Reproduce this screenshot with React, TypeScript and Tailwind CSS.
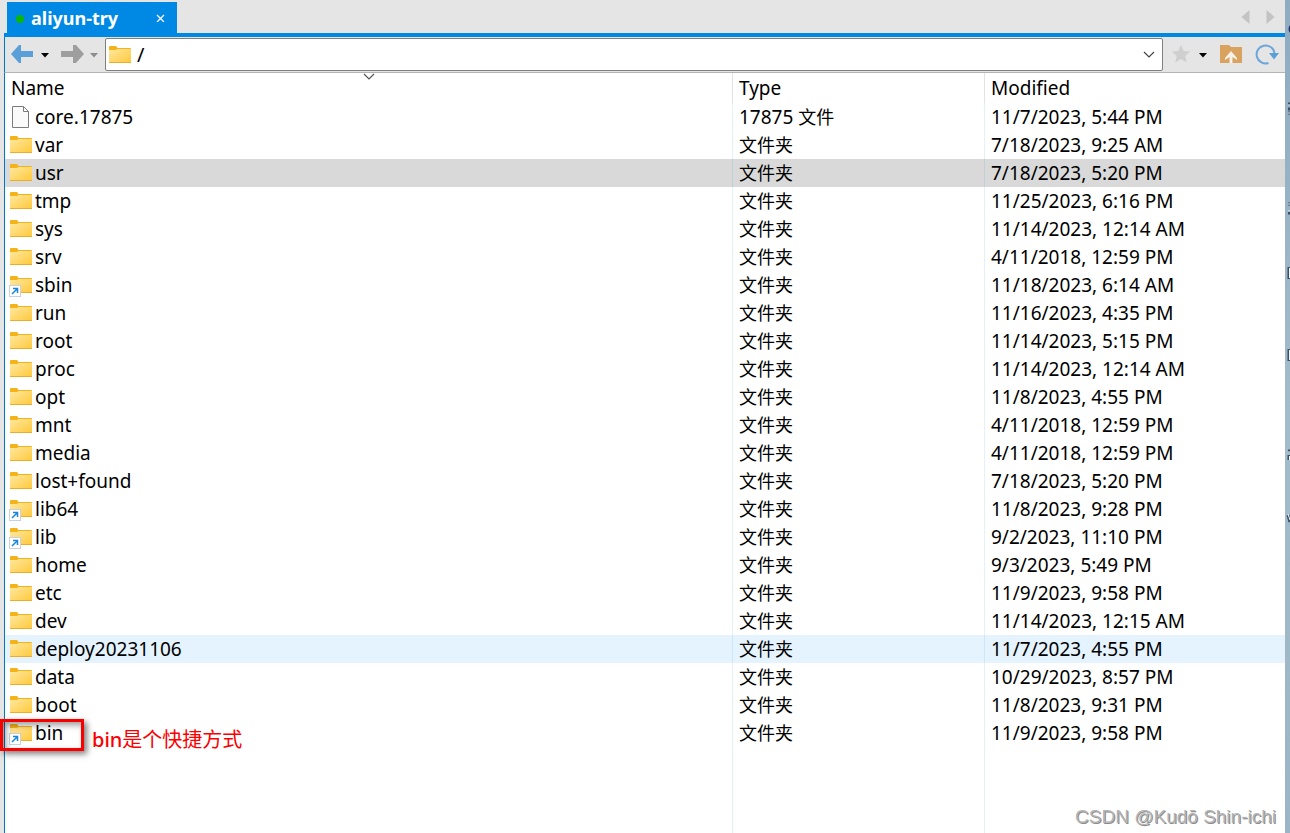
import { ReactNode } from "react";

interface Entry {
  name: string;
  modified: string;
  kind?: "file" | "link";
  state?: "selected" | "hover";
}

const entries: Entry[] = [
  { name: "core.17875", modified: "11/7/2023, 5:44 PM", kind: "file" },
  { name: "var", modified: "7/18/2023, 9:25 AM" },
  { name: "usr", modified: "7/18/2023, 5:20 PM", state: "selected" },
  { name: "tmp", modified: "11/25/2023, 6:16 PM" },
  { name: "sys", modified: "11/14/2023, 12:14 AM" },
  { name: "srv", modified: "4/11/2018, 12:59 PM" },
  { name: "sbin", modified: "11/18/2023, 6:14 AM", kind: "link" },
  { name: "run", modified: "11/16/2023, 4:35 PM" },
  { name: "root", modified: "11/14/2023, 5:15 PM" },
  { name: "proc", modified: "11/14/2023, 12:14 AM" },
  { name: "opt", modified: "11/8/2023, 4:55 PM" },
  { name: "mnt", modified: "4/11/2018, 12:59 PM" },
  { name: "media", modified: "4/11/2018, 12:59 PM" },
  { name: "lost+found", modified: "7/18/2023, 5:20 PM" },
  { name: "lib64", modified: "11/8/2023, 9:28 PM", kind: "link" },
  { name: "lib", modified: "9/2/2023, 11:10 PM", kind: "link" },
  { name: "home", modified: "9/3/2023, 5:49 PM" },
  { name: "etc", modified: "11/9/2023, 9:58 PM" },
  { name: "dev", modified: "11/14/2023, 12:15 AM" },
  { name: "deploy20231106", modified: "11/7/2023, 4:55 PM", state: "hover" },
  { name: "data", modified: "10/29/2023, 8:57 PM" },
  { name: "boot", modified: "11/8/2023, 9:31 PM" },
  { name: "bin", modified: "11/9/2023, 9:58 PM", kind: "link" },
];

const rowColors = {
  normal: "",
  selected: "bg-[#d9d9d9]",
  hover: "bg-[#e5f3ff]",
};

function FolderIcon({ link = false }: { link?: boolean }) {
  return (
    <svg width="24" height="24" viewBox="0 0 24 24" className="shrink-0" aria-hidden="true">
      <defs>
        <linearGradient id="folder" x1="0" y1="0" x2="1" y2="1">
          <stop offset="0" stopColor="#ffe8a0" />
          <stop offset="1" stopColor="#ffc83a" />
        </linearGradient>
      </defs>
      <path d="M1 4Q1 3 2 3H8L9.500 5H22Q23 5 23 6V11H1Z" fill="#f5b31b" />
      <path d="M1 7H8L9.500 6H23V20H1Z" fill="url(#folder)" />
      <path d="M1 19.500H23" stroke="#eaad2c" />
      {link && (
        <>
          <rect x="0.500" y="12.500" width="11" height="11" fill="#fff" stroke="#c9d2dc" />
          <path d="M3 21L8.500 15.500M4 15.500H8.500V20" fill="none" stroke="#1a86d9" strokeWidth="1.500" />
        </>
      )}
    </svg>
  );
}

function FileIcon() {
  return (
    <svg width="24" height="24" viewBox="0 0 24 24" className="shrink-0" aria-hidden="true">
      <path d="M3.500 1.500H14.500L19.500 6.500V22.500H3.500Z" fill="#fafafa" stroke="#7c7c7c" />
      <path d="M14.500 1.500V6.500H19.500" fill="none" stroke="#7c7c7c" />
    </svg>
  );
}

function Caret({ className }: { className: string }) {
  return (
    <svg width="10" height="6" viewBox="0 0 10 6" className={className} aria-hidden="true">
      <path d="M1 1H9L5 5.500Z" fill="currentColor" />
    </svg>
  );
}

function Chevron({ className }: { className: string }) {
  return (
    <svg width="12" height="8" viewBox="0 0 12 8" className={className} aria-hidden="true">
      <path d="M1 1L6 6L11 1" fill="none" stroke="currentColor" strokeWidth="1.200" />
    </svg>
  );
}

function IconButton({ label, children }: { label: string; children: ReactNode }) {
  return (
    <button type="button" aria-label={label} className="flex h-6 shrink-0 items-center justify-center">
      {children}
    </button>
  );
}

function TabBar() {
  return (
    <div className="flex h-[37px] items-end justify-between border-b-4 border-[#0089e4] pl-[3px]">
      <div className="flex h-[31px] w-[170px] items-center justify-between bg-[#0089e4] pr-3 pl-2 text-white">
        <button type="button" className="flex items-center gap-[6px] text-lg font-bold">
          <svg width="10" height="10" viewBox="0 0 10 10" className="shrink-0" aria-hidden="true">
            <circle cx="5" cy="6" r="4" fill="#0cb50c" />
          </svg>
          aliyun-try
        </button>
        <IconButton label="Close tab">
          <svg width="9" height="9" viewBox="0 0 9 9">
            <path d="M1 2L8 9M8 2L1 9" stroke="#fff" strokeWidth="1.300" />
          </svg>
        </IconButton>
      </div>
      <div className="flex h-full items-center gap-4 pr-[10px] text-[#c3c3c3]">
        <IconButton label="Scroll tabs left">
          <svg width="9" height="14" viewBox="0 0 9 14">
            <path d="M8.500 0V14L0.500 7Z" fill="currentColor" />
          </svg>
        </IconButton>
        <IconButton label="Scroll tabs right">
          <svg width="9" height="14" viewBox="0 0 9 14">
            <path d="M0.500 0V14L8.500 7Z" fill="currentColor" />
          </svg>
        </IconButton>
      </div>
    </div>
  );
}

function Toolbar() {
  return (
    <div className="flex h-9 items-center border-b border-l border-b-[#b4b4b4] border-l-[#0078c8] pl-[6px]">
      <div className="flex w-[94px] items-center">
        <IconButton label="Back">
          <svg width="22" height="20" viewBox="0 0 22 20">
            <path d="M0 9L8 0H10V6H22V12H10V18H8Z" fill="#5b9fd8" />
          </svg>
        </IconButton>
        <IconButton label="Back history">
          <Caret className="ml-[7px] mr-[10px] text-black" />
        </IconButton>
        <IconButton label="Forward">
          <svg width="24" height="20" viewBox="0 0 24 20">
            <path d="M24 9L16 0H13V6H1V12H13V18H16Z" fill="#9e9e9e" />
          </svg>
        </IconButton>
        <IconButton label="Forward history">
          <Caret className="ml-[5px] text-[#8c8c8c]" />
        </IconButton>
      </div>
      <div className="flex h-[33px] min-w-0 flex-1 items-center rounded-[2px] border border-[#7f7f7f] bg-white pl-[2px]">
        <FolderIcon />
        <input
          aria-label="Path"
          defaultValue="/"
          className="h-7 min-w-0 flex-1 bg-transparent pl-[5px] text-xl text-black outline-none"
        />
        <IconButton label="Recent paths">
          <Chevron className="mr-[7px] text-[#444]" />
        </IconButton>
      </div>
      <div className="flex w-[122px] items-center pl-2">
        <IconButton label="Bookmark">
          <svg width="20" height="20" viewBox="0 0 20 20">
            <path d="M10 0L12.700 6L19 6.500L14.300 11L15.800 17.500L10 14L4.200 17.500L5.700 11L1 6.500L7.300 6Z" fill="#cfcfcf" />
          </svg>
        </IconButton>
        <IconButton label="Bookmark list">
          <Caret className="mr-3 ml-[7px] text-black" />
        </IconButton>
        <IconButton label="Parent folder">
          <svg width="22" height="20" viewBox="0 0 22 20">
            <path d="M0 0H9L11 2H22V18H0Z" fill="#d9a35f" />
            <path d="M11 6L17 13V15L12.500 12V18H9.500V12L5 15V13Z" fill="#f6f1ea" />
          </svg>
        </IconButton>
        <IconButton label="Refresh">
          <svg width="24" height="22" viewBox="0 0 24 22" className="ml-[13px]">
            <path d="M13.500 19A9 9 0 1 1 19.500 9" fill="none" stroke="#6ba6db" strokeWidth="2" />
            <path d="M14 9H24L19 15.500Z" fill="#5b9fd8" />
          </svg>
        </IconButton>
      </div>
    </div>
  );
}

function BinNote() {
  return (
    <>
      <div className="absolute top-0 -left-[5px] h-8 w-[84px] border-[3px] border-[#f70000] shadow-[3px_3px_6px_rgba(0,0,0,0.5),inset_3px_3px_6px_rgba(0,0,0,0.4)]" />
      <div className="absolute top-[7px] left-[87px] text-xl leading-7 whitespace-nowrap text-[#fb0000]">
        <span className="font-medium">bin</span>是个快捷方式
      </div>
    </>
  );
}

function FileTable() {
  return (
    <div className="flex flex-1 border-l border-[#0078c8] bg-white">
      <table className="w-full table-fixed border-separate border-spacing-0 text-left text-[19px] leading-7 text-black">
        <thead>
          <tr className="h-[30px]">
            <th className="relative border-r border-[#e2e2e2] p-0 pl-[6px] font-normal">
              Name
              <Chevron className="absolute top-0 left-1/2 -translate-x-1/2 text-[#555]" />
            </th>
            <th className="w-[252px] border-r border-[#e2e2e2] p-0 pl-[6px] font-normal">Type</th>
            <th className="w-[300px] p-0 pl-[6px] font-normal">Modified</th>
          </tr>
        </thead>
        <tbody>
          {entries.map(({ name, modified, kind, state }) => (
            <tr key={name} className={rowColors[state ?? "normal"]}>
              <td className="relative h-7 border-r border-[#0078d4]/10 p-0">
                <div className="flex h-7 items-center gap-[2px] pl-1">
                  {kind === "file" ? <FileIcon /> : <FolderIcon link={kind === "link"} />}
                  {name}
                </div>
                {name === "bin" && <BinNote />}
              </td>
              <td className="h-7 border-r border-[#0078d4]/10 p-0 pl-[6px]">
                <div className="h-7">
                  {kind === "file" && "17875 "}
                  <span className="text-lg leading-7">{kind === "file" ? "文件" : "文件夹"}</span>
                </div>
              </td>
              <td className="h-7 p-0 pl-[6px]">{modified}</td>
            </tr>
          ))}
          {/* empty space under the last entry */}
          <tr className="h-full">
            <td className="border-r border-[#0078d4]/10" />
            <td className="border-r border-[#0078d4]/10" />
            <td />
          </tr>
        </tbody>
      </table>
    </div>
  );
}

// desktop behind the window, with the edges of its icon labels
function Desktop() {
  return (
    <div className="w-[5px] overflow-hidden bg-linear-to-b from-[#8fabc0] via-[#a3bccb] to-[#9bb5c6]">
      <svg width="5" height="530" viewBox="0 0 5 530" aria-hidden="true">
        <path d="M5 25Q2 29 5 33Z" fill="#26306a" />
        <g fill="none" stroke="#3c5064" strokeWidth="3">
          <path d="M3 104H5M3 109H5M3 113H5M3 204H5M3 213H5M4 267V279M4 349V361M3 451H5M4 455V460M3 515L5 522" />
        </g>
        <g fill="none" stroke="#eef6fc">
          <path d="M3 105H5M3 113H5M3 204H5M3 211H5M4.500 268V278M4.500 350V360M3 452H5M4.500 456V460M3 514L5 520" />
        </g>
      </svg>
    </div>
  );
}

export default function App() {
  return (
    <div className="relative flex min-h-screen bg-[#e5e5e5] font-['Noto_Sans','Noto_Sans_CJK_SC',sans-serif]">
      <main className="flex min-w-0 flex-1 flex-col pl-1">
        <TabBar />
        <Toolbar />
        <FileTable />
      </main>
      <Desktop />
      <div className="absolute right-[14px] bottom-1 font-['Liberation_Sans',sans-serif] text-[19px] leading-6 text-[#b4b4b4] [text-shadow:1px_1px_0_#8c8c8c]">
        CSDN @Kudō Shin-ichi
      </div>
    </div>
  );
}
